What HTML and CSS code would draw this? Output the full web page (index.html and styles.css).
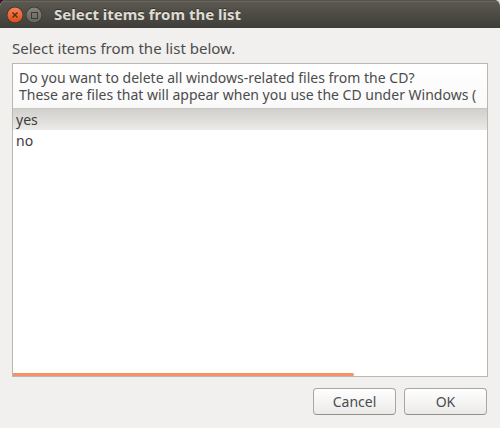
FILE: index.html
```
<!DOCTYPE html>
<html lang="en">
<head>
<meta charset="utf-8">
<title>Select items from the list</title>
<link rel="stylesheet" href="styles.css">
</head>
<body>
<main class="window">
  <header class="titlebar">
    <button class="window-button" type="button" aria-label="Close">
      <svg viewBox="0 0 18 18" width="18" height="18">
        <defs>
          <linearGradient id="close-fill" x1="0" y1="0" x2="0" y2="1">
            <stop offset="0" stop-color="#f68359"/>
            <stop offset="1" stop-color="#df4b16"/>
          </linearGradient>
        </defs>
        <circle cx="9" cy="9" r="8.2" fill="#33322d"/>
        <circle cx="9" cy="9" r="7.6" fill="url(#close-fill)"/>
        <path d="M6.5 6.5l5 5M11.5 6.5l-5 5" stroke="#4b2f20" stroke-width="1.4"/>
      </svg>
    </button>
    <button class="window-button" type="button" aria-label="Maximize">
      <svg viewBox="0 0 18 18" width="18" height="18">
        <defs>
          <linearGradient id="max-fill" x1="0" y1="0" x2="0" y2="1">
            <stop offset="0" stop-color="#85837b"/>
            <stop offset="1" stop-color="#65635c"/>
          </linearGradient>
        </defs>
        <circle cx="9" cy="9" r="8.2" fill="#33322d"/>
        <circle cx="9" cy="9" r="7.6" fill="url(#max-fill)"/>
        <rect x="6.5" y="6.5" width="6" height="6" fill="none" stroke="#3b3a35"/>
      </svg>
    </button>
    <h1 class="title">Select items from the list</h1>
  </header>
  <form class="content">
    <p class="prompt">Select items from the list below.</p>
    <div class="list">
      <table class="items">
        <thead>
          <tr><th scope="col">Do you want to delete all windows-related files from the CD?<br>These are files that will appear when you use the CD under Windows (</th></tr>
        </thead>
        <tbody>
          <tr><td><label class="item"><input type="radio" name="answer" value="yes" checked>yes</label></td></tr>
          <tr><td><label class="item"><input type="radio" name="answer" value="no">no</label></td></tr>
        </tbody>
      </table>
      <div class="scrollbar"></div>
    </div>
    <div class="actions">
      <button class="action" type="button">Cancel</button>
      <button class="action" type="submit">OK</button>
    </div>
  </form>
</main>
</body>
</html>
```
FILE: styles.css
```
* {
  box-sizing: border-box;
}

body {
  margin: 0;
  background: linear-gradient(90deg, #3a0d2a 50%, #d8d6d8 50%);
  color: #4c4c4c;
  font: 14px/17px "Noto Sans", "Open Sans", sans-serif;
}

.window {
  display: flex;
  flex-direction: column;
  min-height: 100vh;
  overflow: hidden;
  border-radius: 6px 6px 0 0;
  background: #f1f0ee;
}

.titlebar {
  display: flex;
  align-items: center;
  gap: 1px;
  height: 28px;
  padding: 1px 6px 0;
  background: linear-gradient(#5c5a51, #3e3d39);
  box-shadow: inset 0 1px #54524a, inset 0 2px #68665d;
}

.window-button {
  display: flex;
  padding: 0;
  border: 0;
  background: none;
}

.title {
  margin: 0 0 0 10px;
  color: #dfdbd2;
  font-size: 15px;
  font-weight: 700;
  text-shadow: 0 -1px #33322d;
}

.content {
  display: flex;
  flex: 1;
  flex-direction: column;
  padding: 12px 12px 13px;
}

.prompt {
  margin: 0 0 6px;
  font-size: 15px;
}

.list {
  display: flex;
  flex: 1;
  flex-direction: column;
  justify-content: space-between;
  overflow: hidden;
  border: 1px solid #bab7b2;
  background: #fff;
}

.items {
  width: 100%;
  border-collapse: collapse;
  color: #3c3c3c;
  white-space: nowrap;
}

.items th {
  padding: 5px 6px;
  border-bottom: 1px solid #c9c6c1;
  background: linear-gradient(#fff, #f9f9f9);
  color: #4c4c4c;
  font-weight: 400;
  text-align: left;
}

.items td {
  padding: 0;
}

.item {
  display: block;
  padding: 2px 3px;
}

.item input {
  position: absolute;
  margin: 0;
  opacity: 0;
}

.item:has(:checked) {
  background: linear-gradient(#d2d0cc, #ebeae8);
}

.scrollbar {
  width: 72%;
  height: 3px;
  border-radius: 0 2px 2px 0;
  background: #f6916a;
}

.actions {
  display: flex;
  justify-content: flex-end;
  gap: 8px;
  margin-top: 11px;
  padding-right: 1px;
}

.action {
  width: 83px;
  height: 27px;
  padding: 0;
  border: 1px solid #aaa7a3;
  border-bottom-color: #94918d;
  border-radius: 4px;
  background: linear-gradient(#fff, #ebeae9);
  color: #4c4c4c;
  font: inherit;
}
```
